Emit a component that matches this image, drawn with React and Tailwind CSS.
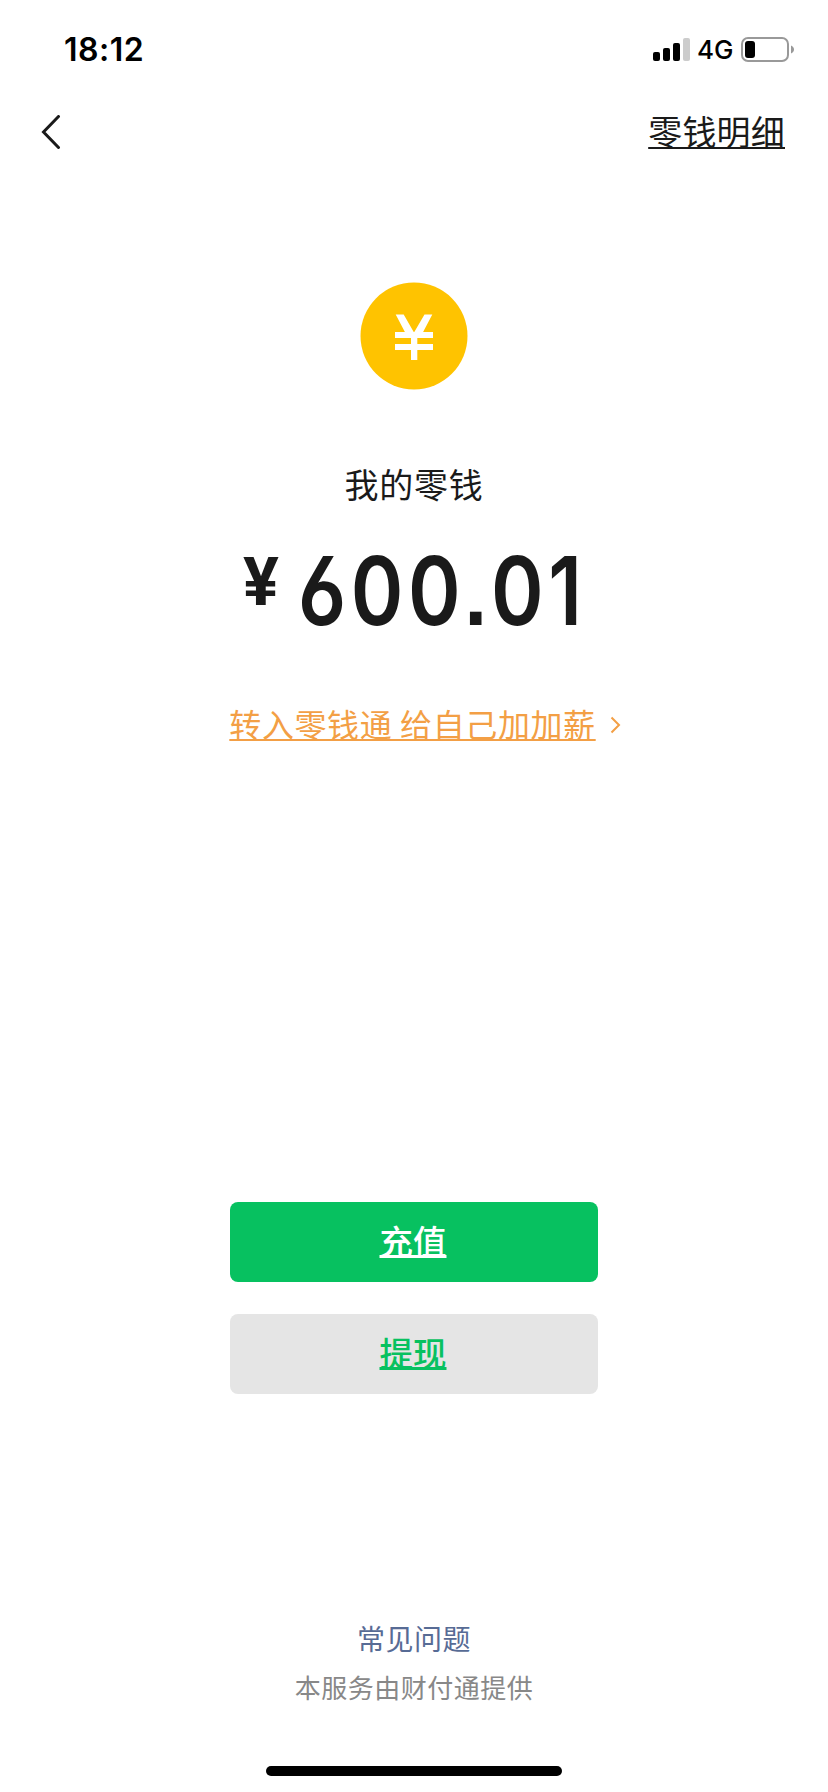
import React from 'react';

const StatusBar = () => (
  <div className="flex h-[100px] items-start justify-between pl-[64px] pr-[34px]">
    <div className="mt-[30px] font-['Inter',sans-serif] text-[32px] font-semibold leading-[40px] tracking-[0.500px] text-black">
      18:12
    </div>
    <div className="mt-[30px] flex h-10 items-center">
      <svg className="h-6 w-[37px]" viewBox="0 0 37 24">
        <rect x="0" y="14" width="7" height="9" rx="2" fill="#000" />
        <rect x="10" y="10" width="7" height="13" rx="2" fill="#000" />
        <rect x="20" y="5" width="7" height="18" rx="2" fill="#000" />
        <rect x="30" y="0" width="7" height="23" rx="2" fill="#ccc" />
      </svg>
      <span className="ml-[7px] w-[36px] font-['Inter',sans-serif] text-[26px] font-medium leading-10 text-black">
        4G
      </span>
      <svg className="ml-[8px] h-[26px] w-[53px]" viewBox="0 0 53 26">
        <rect x="1" y="1" width="46" height="23" rx="6" fill="none" stroke="#999" strokeWidth="2" />
        <rect x="4" y="4" width="10" height="17" rx="3" fill="#000" />
        <path d="M50 8.500c2 .8 3 2.300 3 4s-1 3.200-3 4z" fill="#999" />
      </svg>
    </div>
  </div>
);

const NavBar = () => (
  <div className="flex h-16 items-center justify-between pl-[41px] pr-[43px]">
    <svg className="h-[34px] w-5" viewBox="0 0 20 34" fill="none">
      <path d="M17.500 1.500L2.500 17l15 15.500" stroke="#1a1a1a" strokeWidth="3" strokeLinecap="round" />
    </svg>
    <a className="mb-[3px] text-[34px] leading-[48px] tracking-[0.2px] underline decoration-2 underline-offset-[2px] [text-decoration-skip-ink:none]">
      零钱明细
    </a>
  </div>
);

const CoinIcon = () => (
  <svg className="h-[108px] w-[108px]" viewBox="0 0 108 108" fill="none">
    <circle cx="54" cy="54" r="53.500" fill="#ffc300" />
    <g fill="#fff">
      <path d="M35.700 32.500h8L54 50.500l10.500-18h7.800L61 54H47z" />
      <rect x="35" y="50" width="38" height="6" />
      <rect x="35" y="62" width="38" height="6" />
      <rect x="51" y="51" width="6.300" height="27" />
    </g>
  </svg>
);

const App = () => {
  return (
    <div className="flex h-[1792px] w-[828px] flex-col bg-white font-['Noto_Sans_CJK_SC',sans-serif] text-[#1a1a1a]">
      <StatusBar />
      <NavBar />

      {/* Balance */}
      <div className="mt-[118px] flex flex-col items-center">
        <CoinIcon />
        <div className="mt-[70px] text-[34px] leading-[48px] tracking-[0.7px]">我的零钱</div>
        <div className="mt-[35px] flex h-[96px] w-[344px] items-start">
          <span className="mt-[9px] ml-px w-[37px] font-['Roboto',sans-serif] text-[67px] font-bold leading-[60px]">¥</span>
          <span className="ml-[19px] origin-left scale-x-[0.84] font-['Inter',sans-serif] text-[95px] font-semibold leading-[96px] tracking-[5.500px] [font-feature-settings:'cv03','ss07']">
            600.01
          </span>
        </div>
        <a className="mt-[60px] ml-[22px] flex items-center text-[#f39f45]">
          <span className="text-[32px] leading-[48px] tracking-[0.6px] underline decoration-2 underline-offset-[2px] [text-decoration-skip-ink:none]">
            转入零钱通 给自己加加薪
          </span>
          <svg className="mt-[4px] ml-[14px] h-[18px] w-[11px]" viewBox="0 0 11 18" fill="none">
            <path d="M1.500 1.500L9 9l-7.500 7.500" stroke="currentColor" strokeWidth="2" />
          </svg>
        </a>
      </div>

      {/* Actions */}
      <div className="mt-[455px] flex flex-col items-center gap-8">
        <button className="h-20 w-[368px] rounded-lg bg-[#07c160] pr-[2px] pb-[3px] text-[33.500px] font-medium text-white underline decoration-[3px] underline-offset-[1px] [text-decoration-skip-ink:none]">
          充值
        </button>
        <button className="h-20 w-[368px] rounded-lg bg-[#e5e5e5] pr-[2px] pb-[3px] text-[33.500px] font-medium text-[#07c160] underline decoration-[3px] underline-offset-[1px] [text-decoration-skip-ink:none]">
          提现
        </button>
      </div>

      {/* Footer */}
      <div className="mt-auto flex flex-col items-center">
        <a className="text-[28px] leading-[40px] tracking-[0.500px] text-[#576b95]">常见问题</a>
        <p className="mt-[9px] text-[26px] leading-[40px] tracking-[0.500px] text-[#888]">本服务由财付通提供</p>
        <div className="mt-[59px] mb-4 h-[10px] w-[296px] rounded-full bg-black"></div>
      </div>
    </div>
  );
};

export default App;
